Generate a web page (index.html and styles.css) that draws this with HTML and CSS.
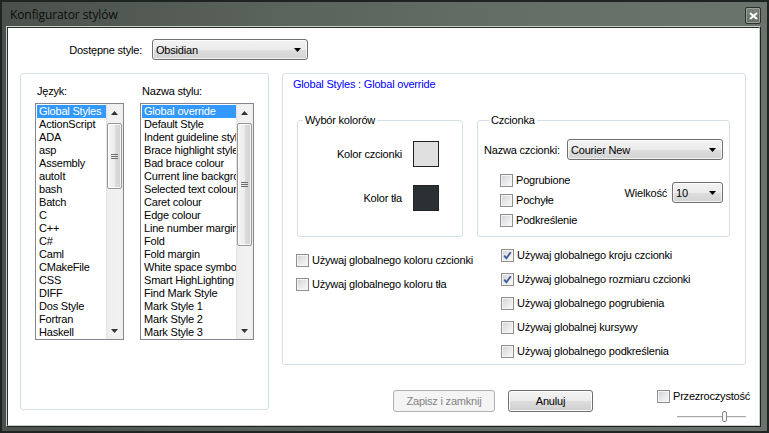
FILE: index.html
```html
<!DOCTYPE html>
<html lang="pl">
<head>
<meta charset="utf-8">
<title>Konfigurator stylów</title>
<link rel="stylesheet" href="styles.css">
</head>
<body>
<div class="window">
  <div class="titlebar">
    <span class="title">Konfigurator stylów</span>
    <span class="close-btn"><svg width="9" height="8" viewBox="0 0 9 8"><path d="M1 1 L8 7 M8 1 L1 7" stroke="#fff" stroke-width="2" fill="none"/></svg></span>
  </div>
  <div class="frame-inner">
    <div class="client">
      <div class="top-row">
        <span class="top-label">Dostępne style:</span>
        <div class="combo combo-theme"><span class="combo-text">Obsidian</span><svg class="combo-arrow" width="7" height="4" viewBox="0 0 7 4"><path d="M0 0 H7 L3.5 4 Z" fill="#000"/></svg></div>
      </div>
      <div class="main">
        <div class="group left-group">
          <div class="list-col">
            <div class="list-label">Język:</div>
            <div class="listbox lb-lang">
              <ul class="items">
                <li class="sel">Global Styles</li>
                <li>ActionScript</li>
                <li>ADA</li>
                <li>asp</li>
                <li>Assembly</li>
                <li>autoIt</li>
                <li>bash</li>
                <li>Batch</li>
                <li>C</li>
                <li>C++</li>
                <li>C#</li>
                <li>Caml</li>
                <li>CMakeFile</li>
                <li>CSS</li>
                <li>DIFF</li>
                <li>Dos Style</li>
                <li>Fortran</li>
                <li>Haskell</li>
              </ul>
              <div class="vscroll">
                <div class="sb-btn"><svg width="7" height="4" viewBox="0 0 7 4"><path d="M0 4 H7 L3.5 0 Z" fill="#333"/></svg></div>
                <div class="sb-track"><div class="thumb thumb-lang"><span class="grip"></span></div></div>
                <div class="sb-btn"><svg width="7" height="4" viewBox="0 0 7 4"><path d="M0 0 H7 L3.5 4 Z" fill="#333"/></svg></div>
              </div>
            </div>
          </div>
          <div class="list-col">
            <div class="list-label">Nazwa stylu:</div>
            <div class="listbox lb-style">
              <ul class="items">
                <li class="sel">Global override</li>
                <li>Default Style</li>
                <li>Indent guideline style</li>
                <li>Brace highlight style</li>
                <li>Bad brace colour</li>
                <li>Current line background colour</li>
                <li>Selected text colour</li>
                <li>Caret colour</li>
                <li>Edge colour</li>
                <li>Line number margin</li>
                <li>Fold</li>
                <li>Fold margin</li>
                <li>White space symbol</li>
                <li>Smart HighLighting</li>
                <li>Find Mark Style</li>
                <li>Mark Style 1</li>
                <li>Mark Style 2</li>
                <li>Mark Style 3</li>
              </ul>
              <div class="vscroll">
                <div class="sb-btn"><svg width="7" height="4" viewBox="0 0 7 4"><path d="M0 4 H7 L3.5 0 Z" fill="#333"/></svg></div>
                <div class="sb-track"><div class="thumb thumb-style"><span class="grip"></span></div></div>
                <div class="sb-btn"><svg width="7" height="4" viewBox="0 0 7 4"><path d="M0 0 H7 L3.5 4 Z" fill="#333"/></svg></div>
              </div>
            </div>
          </div>
        </div>
        <div class="right-col">
          <div class="group right-group">
            <div class="style-title">Global Styles : Global override</div>
            <div class="fs-row">
              <fieldset class="fs fs-colors">
                <legend>Wybór kolorów</legend>
                <div class="color-row"><span>Kolor czcionki</span><span class="swatch swatch-fg"></span></div>
                <div class="color-row"><span>Kolor tła</span><span class="swatch swatch-bg"></span></div>
              </fieldset>
              <fieldset class="fs fs-font">
                <legend>Czcionka</legend>
                <div class="font-name-row">
                  <span>Nazwa czcionki:</span>
                  <div class="combo combo-font"><span class="combo-text">Courier New</span><svg class="combo-arrow" width="7" height="4" viewBox="0 0 7 4"><path d="M0 0 H7 L3.5 4 Z" fill="#000"/></svg></div>
                </div>
                <div class="font-style-row">
                  <div class="style-checks">
                    <div class="chk-row"><span class="cb"></span><span class="chk-label">Pogrubione</span></div>
                    <div class="chk-row"><span class="cb"></span><span class="chk-label">Pochyłe</span></div>
                    <div class="chk-row"><span class="cb"></span><span class="chk-label">Podkreślenie</span></div>
                  </div>
                  <div class="size-block">
                    <span>Wielkość</span>
                    <div class="combo combo-size"><span class="combo-text">10</span><svg class="combo-arrow" width="7" height="4" viewBox="0 0 7 4"><path d="M0 0 H7 L3.5 4 Z" fill="#000"/></svg></div>
                  </div>
                </div>
              </fieldset>
            </div>
            <div class="global-row">
              <div class="gcol gcol-left">
                <div class="g-row"><span class="cb"></span><span class="chk-label">Używaj globalnego koloru czcionki</span></div>
                <div class="g-row"><span class="cb"></span><span class="chk-label">Używaj globalnego koloru tła</span></div>
              </div>
              <div class="gcol gcol-right">
                <div class="g-row"><span class="cb checked"><svg width="11" height="11" viewBox="0 0 11 11"><path d="M2.2 5.6 L4.4 8.2 L8.8 2.2" stroke="#3e5c9e" stroke-width="1.8" fill="none"/></svg></span><span class="chk-label">Używaj globalnego kroju czcionki</span></div>
                <div class="g-row"><span class="cb checked"><svg width="11" height="11" viewBox="0 0 11 11"><path d="M2.2 5.6 L4.4 8.2 L8.8 2.2" stroke="#3e5c9e" stroke-width="1.8" fill="none"/></svg></span><span class="chk-label">Używaj globalnego rozmiaru czcionki</span></div>
                <div class="g-row"><span class="cb"></span><span class="chk-label">Używaj globalnego pogrubienia</span></div>
                <div class="g-row"><span class="cb"></span><span class="chk-label">Używaj globalnej kursywy</span></div>
                <div class="g-row"><span class="cb"></span><span class="chk-label">Używaj globalnego podkreślenia</span></div>
              </div>
            </div>
          </div>
          <div class="bottom-row">
            <div class="btn btn-disabled btn-save">Zapisz i zamknij</div>
            <div class="btn btn-cancel">Anuluj</div>
            <div class="trans">
              <div class="trans-row"><span class="cb"></span><span class="chk-label">Przezroczystość</span></div>
              <div class="slider"><span class="slider-thumb"></span></div>
            </div>
          </div>
        </div>
      </div>
    </div>
  </div>
</div>
</body>
</html>
```

FILE: styles.css
```css
* { box-sizing: border-box; }
html, body { margin: 0; padding: 0; }
body {
  width: 769px;
  height: 433px;
  overflow: hidden;
  background: #202523;
  font-family: "Liberation Sans", Arial, sans-serif;
  font-size: 11px;
  letter-spacing: -0.2px;
  color: #000;
}

.window {
  width: 769px;
  height: 433px;
  border: 2px solid #1f2422;
  background: linear-gradient(90deg, #4a514c 0%, #5a625c 35%, #656e67 70%, #6a736c 100%);
  padding: 0 6px 4px 4px;
  display: flex;
  flex-direction: column;
}

.titlebar {
  height: 24px;
  flex: none;
  display: flex;
  justify-content: space-between;
  align-items: flex-start;
  padding-left: 4px;
}
.title {
  font-family: "Open Sans", "Noto Sans", sans-serif;
  font-size: 12px;
  letter-spacing: -0.1px;
  line-height: 24px;
  padding-top: 1px;
  color: #0b0c0b;
}
.close-btn {
  margin-top: 5px;
  width: 16px;
  height: 17px;
  border: 1px solid #2b302d;
  border-radius: 2px;
  background: linear-gradient(#7b847c, #656e67);
  box-shadow: inset 0 0 0 1px #98a099;
  display: flex;
  align-items: center;
  justify-content: center;
}

.frame-inner {
  flex: 1;
  border: 1px solid;
  border-color: #c9cfca #1d2220 #1d2220 #c9cfca;
}
.client {
  height: 100%;
  border: 1px solid;
  border-color: #2a2f2c #c9cfca #c9cfca #2a2f2c;
  background: #fff;
  padding: 11px 0 0 12px;
}

/* top row */
.top-row {
  display: flex;
  align-items: center;
  height: 21px;
}
.top-label {
  width: 122px;
  text-align: right;
  margin-right: 10px;
}
.combo {
  height: 21px;
  border: 1px solid #707070;
  border-radius: 3px;
  background: linear-gradient(#f3f3f3, #ebebeb 50%, #dedede 51%, #d3d3d3);
  box-shadow: inset 0 0 0 1px rgba(255, 255, 255, 0.7);
  display: flex;
  align-items: center;
  padding-left: 3px;
}
.combo-text { flex: 1; white-space: nowrap; }
.combo-arrow { flex: none; margin-right: 6px; }
.combo-theme { width: 156px; }
.combo-font { width: 156px; }
.combo-size { width: 51px; }

.main {
  display: flex;
  margin-top: 13px;
  align-items: flex-start;
}
.group {
  border: 1px solid #d5dfe5;
  border-radius: 3px;
}

/* left: lists */
.left-group {
  width: 249px;
  height: 337px;
  padding: 11px 0 0 14px;
  display: flex;
  gap: 16px;
}
.list-col { display: flex; flex-direction: column; }
.list-label {
  height: 13px;
  line-height: 13px;
  padding-left: 2px;
  margin-bottom: 5px;
}
.listbox {
  height: 237px;
  border: 1px solid #828790;
  display: flex;
}
.lb-lang { width: 89px; }
.lb-style { width: 114px; }
.items {
  flex: 1;
  min-width: 0;
  list-style: none;
  margin: 0;
  padding: 1px 0 0 1px;
  overflow: hidden;
}
.items li {
  height: 13px;
  line-height: 13px;
  padding-left: 2px;
  white-space: nowrap;
  overflow: hidden;
}
.items li.sel { background: #3399ff; color: #fff; }

.vscroll {
  width: 17px;
  flex: none;
  display: flex;
  flex-direction: column;
  background: linear-gradient(90deg, #e2e2e2 0, #efefef 2px, #f2f2f2 80%, #ececec);
}
.sb-btn {
  height: 17px;
  flex: none;
  display: flex;
  align-items: center;
  justify-content: center;
}
.sb-track { flex: 1; padding: 2px 1px 0 1px; }
.thumb {
  border: 1px solid #979797;
  border-radius: 2px;
  background: linear-gradient(90deg, #f5f5f5, #ececec 50%, #dcdcdc 51%, #d2d2d2);
  box-shadow: inset 0 0 0 1px rgba(255, 255, 255, 0.8);
  display: flex;
  align-items: center;
  justify-content: center;
}
.thumb-lang { height: 66px; }
.thumb-style { height: 123px; }
.grip {
  width: 7px;
  height: 5px;
  border-top: 1px solid #6e6e6e;
  border-bottom: 1px solid #6e6e6e;
  background: linear-gradient(#6e6e6e, #6e6e6e) center / 100% 1px no-repeat;
}

/* right */
.right-col {
  margin-left: 13px;
  display: flex;
  flex-direction: column;
}
.right-group {
  width: 464px;
  height: 292px;
  padding: 4px 0 0 10px;
}
.style-title {
  color: #0000ff;
  height: 13px;
  line-height: 13px;
}
.fs-row {
  display: flex;
  gap: 14px;
  margin-top: 23px;
  margin-left: 4px;
  align-items: flex-start;
}
.fs {
  margin: 0;
  min-width: 0;
  border: 1px solid #d5dfe5;
  border-radius: 3px;
  height: 123px;
}
.fs legend {
  padding: 0 2px;
  margin-left: 5px;
  line-height: 13px;
}
.fs-colors {
  width: 166px;
  padding: 14px 23px 0 0;
}
.color-row {
  display: flex;
  align-items: center;
  justify-content: flex-end;
  gap: 11px;
}
.color-row + .color-row { margin-top: 18px; }
.swatch {
  width: 26px;
  height: 26px;
  border: 1px solid #222;
}
.swatch-fg { background: #e0e0e0; }
.swatch-bg { background: #2b3133; }

.fs-font {
  width: 253px;
  padding: 12px 6px 0 6px;
}
.font-name-row {
  display: flex;
  align-items: center;
  justify-content: space-between;
}
.font-style-row {
  display: flex;
  align-items: flex-start;
  margin-top: 10px;
}
.style-checks { margin-left: 16px; }
.chk-row {
  height: 20px;
  display: flex;
  align-items: center;
}
.size-block {
  margin-left: auto;
  margin-top: 12px;
  display: flex;
  align-items: center;
  gap: 5px;
}

.cb {
  width: 13px;
  height: 13px;
  flex: none;
  border: 1px solid #8e8f8f;
  background: linear-gradient(135deg, #cdd0d4 0%, #e9eaec 55%, #f8f8f8 100%);
  box-shadow: inset 0 0 0 1px #f4f4f4;
  display: flex;
  align-items: center;
  justify-content: center;
}
.chk-label { margin-left: 3px; white-space: nowrap; line-height: 13px; }

.global-row {
  display: flex;
  margin-top: 7px;
}
.gcol-left { margin-left: 3px; width: 205px; padding-top: 5px; }
.g-row {
  height: 24px;
  display: flex;
  align-items: flex-start;
  padding-top: 5px;
}

/* bottom */
.bottom-row {
  display: flex;
  align-items: flex-start;
  margin-top: 25px;
  padding-left: 111px;
}
.btn {
  height: 22px;
  border: 1px solid #707070;
  border-radius: 3px;
  background: linear-gradient(#f3f3f3, #ebebeb 50%, #dddddd 51%, #cfcfcf);
  box-shadow: inset 0 0 0 1px #fcfcfc;
  display: flex;
  align-items: center;
  justify-content: center;
}
.btn-disabled {
  border-color: #adb2b5;
  background: #f4f4f4;
  box-shadow: none;
  color: #838383;
}
.btn-save { width: 102px; }
.btn-cancel { width: 85px; margin-left: 13px; }

.trans {
  margin-left: 64px;
  display: flex;
  flex-direction: column;
}
.trans-row {
  display: flex;
  align-items: center;
  height: 13px;
}
.slider {
  margin-top: 8px;
  margin-left: 20px;
  width: 69px;
  height: 11px;
  display: flex;
  align-items: center;
  background: linear-gradient(#a9a9a9, #a9a9a9) 0 5px / 100% 1px no-repeat,
              linear-gradient(#e8e8e8, #e8e8e8) 0 6px / 100% 1px no-repeat;
}
.slider-thumb {
  width: 5px;
  height: 11px;
  margin-left: 45px;
  border: 1px solid #8a8a8a;
  border-radius: 2px;
  background: #f6f6f6;
}
```
